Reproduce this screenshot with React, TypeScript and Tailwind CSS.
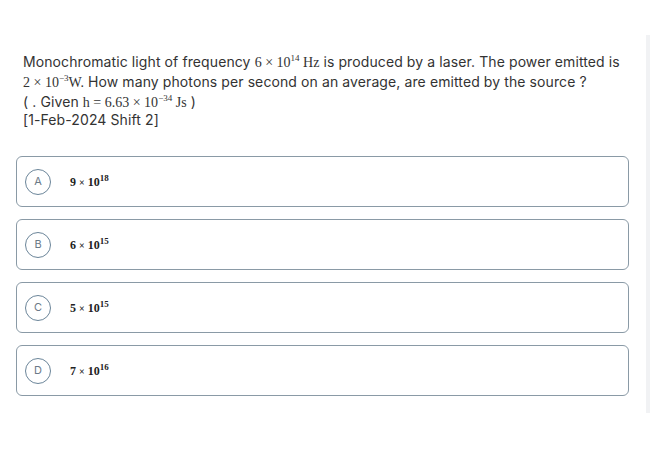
import React from "react";

const serif = { fontFamily: '"Liberation Serif", "Times New Roman", serif' };

function Opt({ letter, base, exp }: { letter: string; base: string; exp: string }) {
  return (
    <div className="flex h-[51px] items-center rounded-[6px] border border-[#8a9aa6] pl-[8px]">
      <div className="flex h-[26px] w-[26px] items-center justify-center rounded-full border border-[#6b8599] text-[11px] text-[#6b7a87]">
        {letter}
      </div>
      <div className="ml-[19px] text-[12px] font-bold leading-none text-[#222]" style={serif}>
        {base} <span className="text-[10px]">×</span> 10
        <span className="relative top-[-5px] text-[9px] font-bold">{exp}</span>
      </div>
    </div>
  );
}

function Sup({ children }: { children: React.ReactNode }) {
  return <span className="relative top-[-6px] text-[9px]">{children}</span>;
}

function M({ children }: { children: React.ReactNode }) {
  return (
    <span style={serif} className="text-[14px] leading-none tracking-normal">
      {children}
    </span>
  );
}

export default function App() {
  return (
    <div
      className="relative h-[450px] w-[650px] bg-white"
      style={{ fontFamily: 'Inter, "Noto Sans", sans-serif' }}
    >
      <div className="absolute right-0 top-[35px] h-[378px] w-[4px] bg-[#f1f2f4]" />
      <div className="pl-[23px] pr-[20px] pt-[52px] text-[14px] tracking-[0.1px] leading-[20px] text-[#333]">
        <p>
          Monochromatic light of frequency{" "}
          <M>
            6 × 10<Sup>14</Sup> Hz
          </M>{" "}
          is produced by a laser. The power emitted is
          <br />
          <M>
            2 × 10<Sup>−3</Sup>W.
          </M>{" "}
          How many photons per second on an average, are emitted by the source ?
        </p>
        <p className="leading-[19px]">
          ( . Given{" "}
          <M>
            h = 6.63 × 10<Sup>−34</Sup> Js
          </M>{" "}
          )
        </p>
        <p className="leading-[17px]">[1-Feb-2024 Shift 2]</p>
      </div>
      <div className="mt-[28px] ml-[16px] w-[613px] flex flex-col gap-[12px]">
        <Opt letter="A" base="9" exp="18" />
        <Opt letter="B" base="6" exp="15" />
        <Opt letter="C" base="5" exp="15" />
        <Opt letter="D" base="7" exp="16" />
      </div>
    </div>
  );
}
